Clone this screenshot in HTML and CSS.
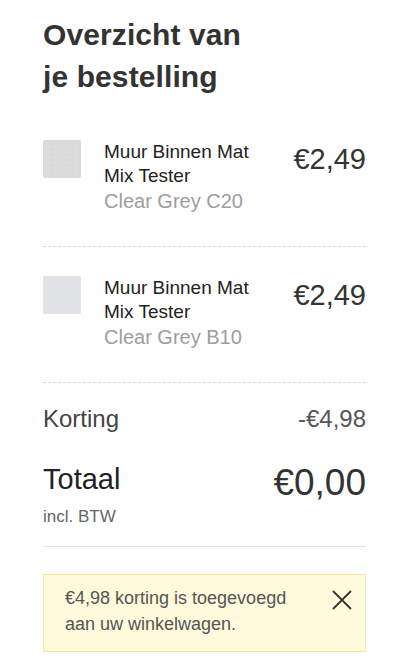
FILE: index.html
```html
<!DOCTYPE html>
<html lang="nl">
<head>
<meta charset="utf-8">
<title>Overzicht van je bestelling</title>
<link rel="stylesheet" href="styles.css">
</head>
<body>
<main class="summary">
  <h1 class="title">Overzicht van<br>je bestelling</h1>

  <div class="item">
    <div class="thumb thumb-textured"></div>
    <div class="info">
      <div class="name">Muur Binnen Mat Mix Tester</div>
      <div class="variant">Clear Grey C20</div>
    </div>
    <div class="price">€2,49</div>
  </div>

  <div class="item">
    <div class="thumb thumb-flat"></div>
    <div class="info">
      <div class="name">Muur Binnen Mat Mix Tester</div>
      <div class="variant">Clear Grey B10</div>
    </div>
    <div class="price">€2,49</div>
  </div>

  <div class="totals">
    <div class="row discount">
      <span>Korting</span>
      <span class="discount-value">-€4,98</span>
    </div>
    <div class="row total">
      <div>
        <div class="total-label">Totaal</div>
        <div class="vat">incl. BTW</div>
      </div>
      <div class="total-value">€0,00</div>
    </div>
  </div>

  <div class="notice">
    <p class="notice-text">€4,98 korting is toegevoegd aan uw winkelwagen.</p>
    <button class="close" aria-label="Sluiten">
      <svg width="20" height="20" viewBox="0 0 20 20"><path d="M1 1 L19 19 M19 1 L1 19" stroke="#333" stroke-width="1.8" fill="none"/></svg>
    </button>
  </div>
</main>
</body>
</html>
```

FILE: styles.css
```css
* { box-sizing: border-box; }
html, body { margin: 0; padding: 0; background: #fff; }
body {
  font-family: "Liberation Sans", Arial, sans-serif;
  color: #333;
}
.summary {
  padding: 14px 50px 20px 43px;
}
.title {
  margin: 0 0 13px;
  font-size: 30px;
  line-height: 42px;
  font-weight: bold;
  color: #333;
  letter-spacing: 0.1px;
}
.item {
  display: flex;
  align-items: flex-start;
  padding: 29px 0 33px;
  background-image: repeating-linear-gradient(to right, #d9d9d9 0 3px, transparent 3px 5px);
  background-size: 100% 1px;
  background-position: left bottom;
  background-repeat: no-repeat;
}
.thumb {
  width: 38px;
  height: 38px;
  border-radius: 2px;
  flex: none;
}
.thumb-textured {
  background-color: #dadada;
  background-image: radial-gradient(circle, #e2e2e2 0.6px, transparent 1px), radial-gradient(circle, #e0e0e0 0.6px, transparent 1px);
  background-size: 5px 5px, 7px 6px;
  background-position: 0 0, 2px 3px;
}
.thumb-flat { background: #e1e2e4; }
.info {
  width: 160px;
  margin-left: 23px;
}
.name {
  font-size: 19px;
  line-height: 24px;
  color: #222;
}
.variant {
  font-size: 20px;
  line-height: 26px;
  color: #9d9d9d;
}
.price {
  margin-left: auto;
  font-size: 29px;
  line-height: 38px;
  color: #333;
}
.totals {
  padding: 21px 0 19px;
  border-bottom: 1px solid #e3e3e3;
}
.row {
  display: flex;
  justify-content: space-between;
  align-items: flex-start;
}
.discount {
  font-size: 24px;
  line-height: 30px;
  color: #444;
}
.discount-value { color: #555; }
.total { margin-top: 22px; }
.total-label {
  font-size: 29px;
  line-height: 46px;
  color: #222;
}
.vat {
  margin-top: 5px;
  font-size: 17px;
  line-height: 20px;
  color: #666;
}
.total-value {
  font-size: 37px;
  line-height: 54px;
  color: #333;
}
.notice {
  margin-top: 27px;
  display: flex;
  align-items: flex-start;
  justify-content: space-between;
  background: #fffadc;
  border: 1px solid #f7e7a6;
  padding: 10px 13px 14px 21px;
}
.notice-text {
  margin: 0;
  width: 240px;
  font-size: 18px;
  line-height: 26px;
  color: #555;
}
.close {
  border: 0;
  background: none;
  padding: 0;
  margin-top: 5px;
  width: 20px;
  height: 20px;
  cursor: pointer;
}
.close svg { display: block; }
```
